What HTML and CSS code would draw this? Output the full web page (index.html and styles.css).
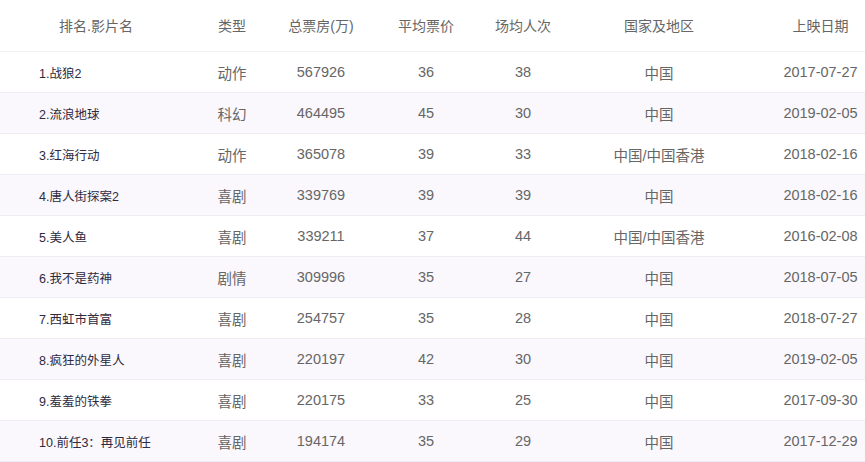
FILE: index.html
```html
<!DOCTYPE html>
<html lang="zh">
<head>
<meta charset="utf-8">
<link rel="stylesheet" href="styles.css">
</head>
<body>
<div class="table">
  <div class="row head">
    <div class="c name">排名.影片名</div>
    <div class="c">类型</div>
    <div class="c">总票房(万)</div>
    <div class="c">平均票价</div>
    <div class="c">场均人次</div>
    <div class="c">国家及地区</div>
    <div class="c date">上映日期</div>
  </div>
  <div class="row">
    <div class="c name">1.战狼2</div><div class="c">动作</div><div class="c">567926</div><div class="c">36</div><div class="c">38</div><div class="c">中国</div><div class="c date">2017-07-27</div>
  </div>
  <div class="row alt">
    <div class="c name">2.流浪地球</div><div class="c">科幻</div><div class="c">464495</div><div class="c">45</div><div class="c">30</div><div class="c">中国</div><div class="c date">2019-02-05</div>
  </div>
  <div class="row">
    <div class="c name">3.红海行动</div><div class="c">动作</div><div class="c">365078</div><div class="c">39</div><div class="c">33</div><div class="c">中国/中国香港</div><div class="c date">2018-02-16</div>
  </div>
  <div class="row alt">
    <div class="c name">4.唐人街探案2</div><div class="c">喜剧</div><div class="c">339769</div><div class="c">39</div><div class="c">39</div><div class="c">中国</div><div class="c date">2018-02-16</div>
  </div>
  <div class="row">
    <div class="c name">5.美人鱼</div><div class="c">喜剧</div><div class="c">339211</div><div class="c">37</div><div class="c">44</div><div class="c">中国/中国香港</div><div class="c date">2016-02-08</div>
  </div>
  <div class="row alt">
    <div class="c name">6.我不是药神</div><div class="c">剧情</div><div class="c">309996</div><div class="c">35</div><div class="c">27</div><div class="c">中国</div><div class="c date">2018-07-05</div>
  </div>
  <div class="row">
    <div class="c name">7.西虹市首富</div><div class="c">喜剧</div><div class="c">254757</div><div class="c">35</div><div class="c">28</div><div class="c">中国</div><div class="c date">2018-07-27</div>
  </div>
  <div class="row alt">
    <div class="c name">8.疯狂的外星人</div><div class="c">喜剧</div><div class="c">220197</div><div class="c">42</div><div class="c">30</div><div class="c">中国</div><div class="c date">2019-02-05</div>
  </div>
  <div class="row">
    <div class="c name">9.羞羞的铁拳</div><div class="c">喜剧</div><div class="c">220175</div><div class="c">33</div><div class="c">25</div><div class="c">中国</div><div class="c date">2017-09-30</div>
  </div>
  <div class="row alt">
    <div class="c name">10.前任3：再见前任</div><div class="c">喜剧</div><div class="c">194174</div><div class="c">35</div><div class="c">29</div><div class="c">中国</div><div class="c date">2017-12-29</div>
  </div>
</div>
</body>
</html>
```
FILE: styles.css
```css
html, body {
  margin: 0;
  padding: 0;
  background: #ffffff;
}
body {
  font-family: "Liberation Sans", "Noto Sans CJK SC", sans-serif;
  color: #666666;
  overflow: hidden;
}
.table {
  width: 865px;
}
.row {
  display: grid;
  grid-template-columns: 192px 80px 98px 112px 82px 190px 111px;
  height: 40px;
  border-bottom: 1px solid #eeecf4;
  align-items: center;
  font-size: 14.5px;
}
.row.head {
  height: 51px;
  border-bottom: 1px solid #f1f1f3;
  font-size: 14px;
  padding-bottom: 0;
}
.row.head .c {
  padding-bottom: 1px;
}
.row.alt {
  background: #faf8fd;
}
.c {
  text-align: center;
  white-space: nowrap;
}
.c.name {
  text-align: left;
  padding-left: 39px;
  font-size: 12.5px;
  color: #2e2a40;
}
.head .c.name {
  text-align: center;
  padding-left: 0;
  font-size: 14px;
  color: #666666;
}
.c.date {
  padding-left: 22px;
}
```
